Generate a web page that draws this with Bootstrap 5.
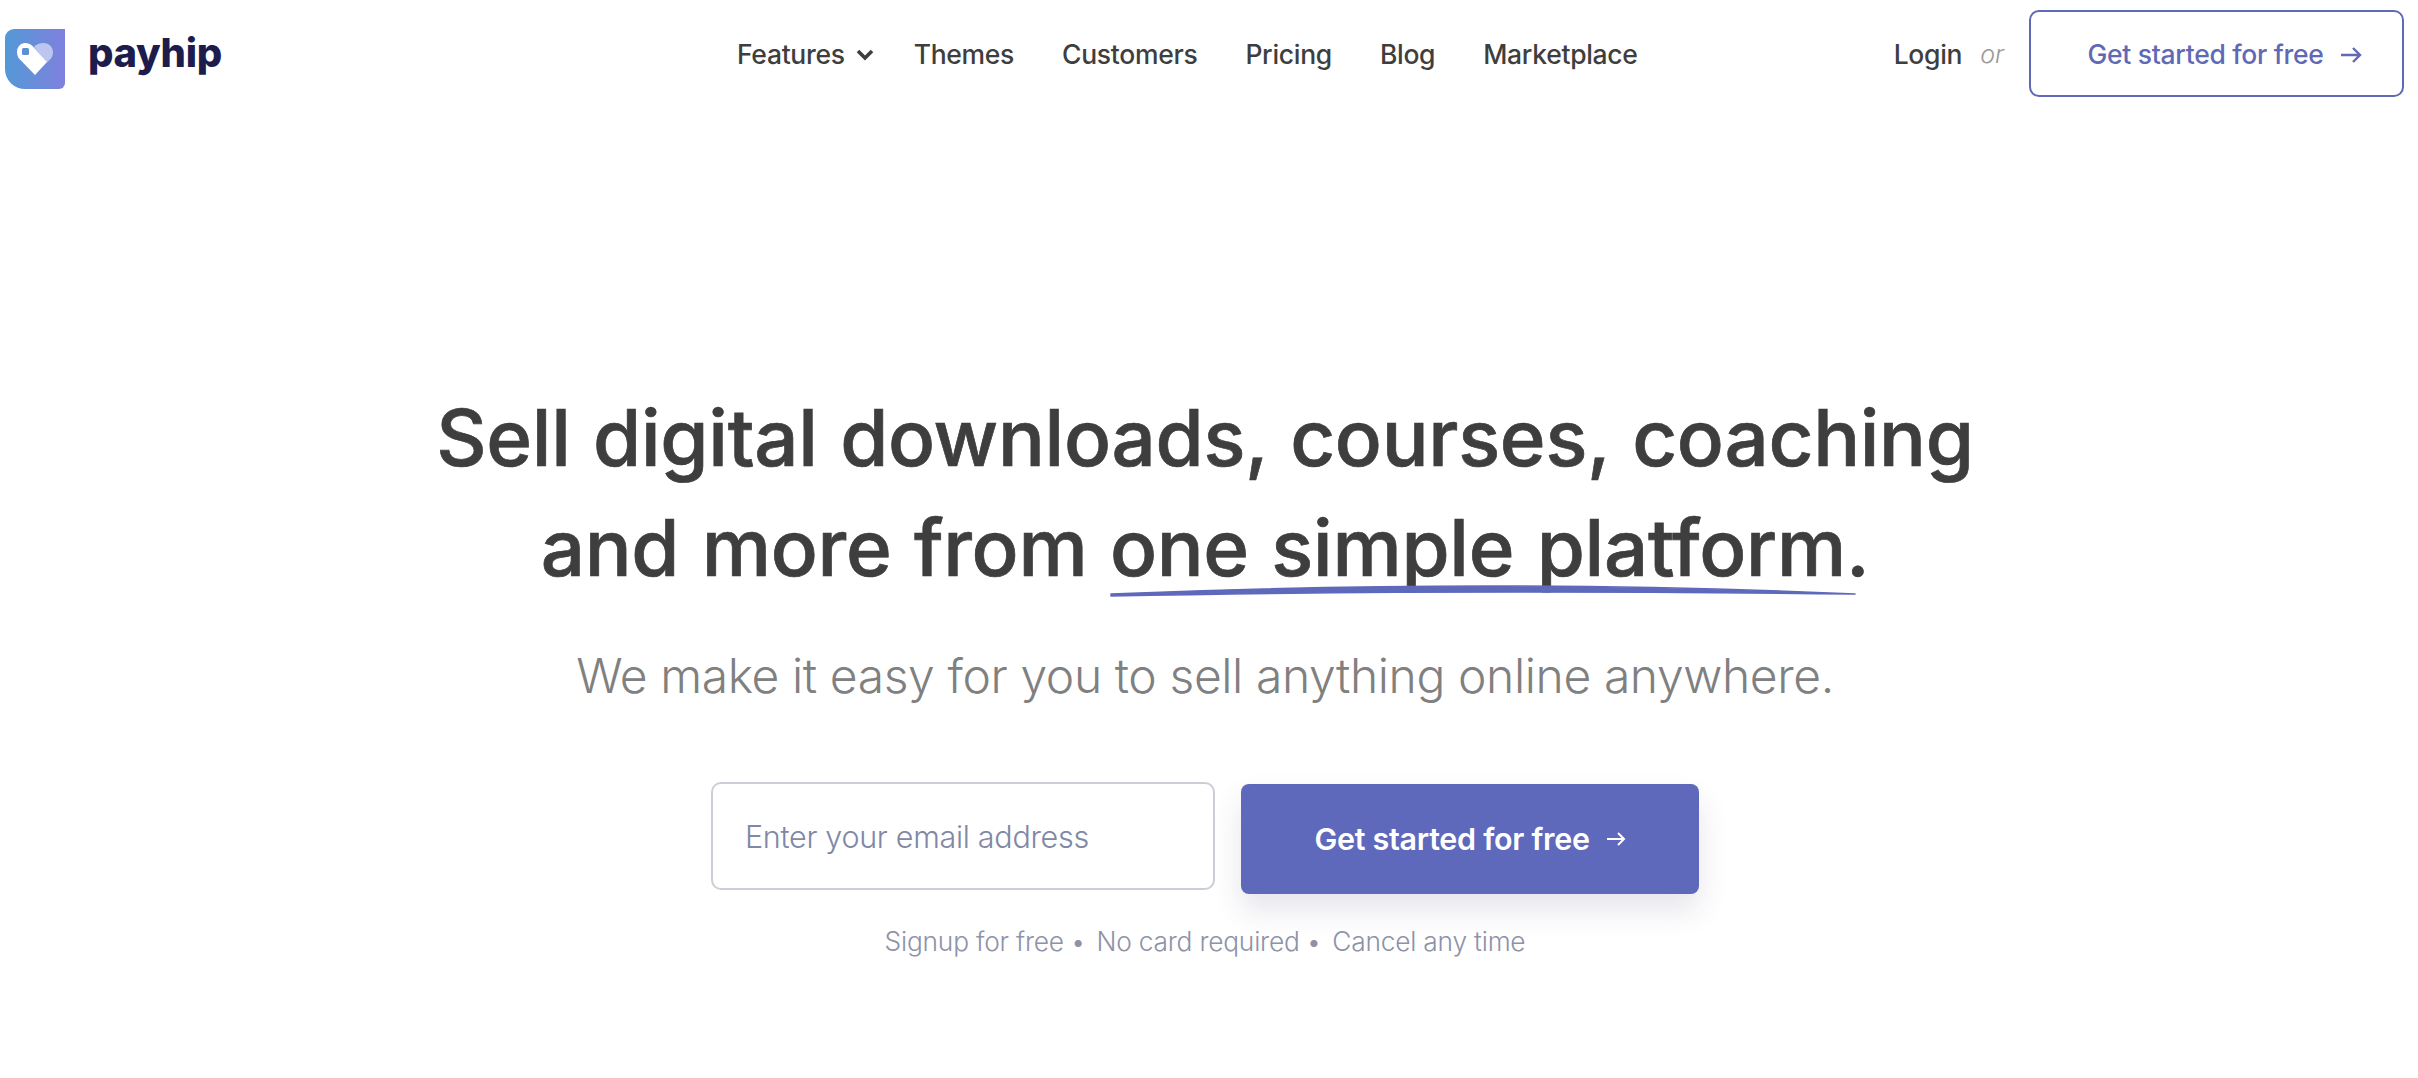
<!DOCTYPE html>
<html lang="en">
<head>
  <meta charset="UTF-8">
  <title>Payhip</title>
  <link href="https://cdn.jsdelivr.net/npm/bootstrap@5.3.3/dist/css/bootstrap.min.css" rel="stylesheet">
  <style>
    body { font-family: Inter, "Liberation Sans", sans-serif; color: #3e3e3e; background: #fff; }
    .top-bar { height: 106px; padding: 10px 14px 10px 5px; }
    .brand-box { width: 520px; }
    .logo-mark { margin-top: 12px; }
    .brand-name { font-weight: 800; font-size: 40px; color: #1c1d4d; letter-spacing: -.3px; margin-left: 23px; line-height: 1; }
    .main-links { gap: 48px; margin-left: 212px; padding-top: 4px; }
    .main-links a, .login-link { font-size: 26.5px; font-weight: 500; color: #3e3e3e; text-decoration: none; letter-spacing: -.3px; }
    .main-links .has-menu { margin-right: -8px; }
    .has-menu svg { margin-left: 3px; }
    .login-link, .or-word { padding-top: 4px; }
    .or-word { font-size: 25px; font-style: italic; font-weight: 300; color: #999; margin: 0 25px 0 18px; }
    .btn-ghost { width: 375px; height: 87px; padding: 9px 12px 6px 28px; border: 2px solid #5f69b5; border-radius: 10px; color: #5f69b5; font-size: 26.5px; font-weight: 500; letter-spacing: -.3px; background: #fff; }
    .hero-box { padding: 277px 8px 0 0; }
    .hero-title { font-size: 78px; font-weight: 500; -webkit-text-stroke: .7px #3e3e3e; line-height: 110px; margin: 0; color: #3e3e3e; letter-spacing: -.3px; word-spacing: 2px; }
    .scribble { position: relative; display: inline-block; }
    .scribble svg { position: absolute; left: 0; top: 89px; width: calc(100% + 10px); height: 16px; }
    .hero-sub { font-size: 48px; font-weight: 300; color: #808080; margin: 43px 0 0; line-height: 60px; letter-spacing: -.4px; }
    .signup-row { margin-top: 76px; gap: 26px; }
    .email-box { width: 504px; height: 108px; border: 2px solid #ccced6; border-radius: 10px; font-size: 30.5px; font-weight: 300; padding: 0 32px; letter-spacing: -.3px; }
    .email-box::placeholder { color: #8088a5; }
    .btn-solid { width: 458px; height: 110px; margin-top: 2px; background: #5f69bb; color: #fff; border: 0; border-radius: 8px; font-size: 30.5px; font-weight: 600; letter-spacing: -.3px; box-shadow: 0 16px 30px rgba(40, 44, 90, .12); }
    .btn-solid:hover { background: #5f69bb; color: #fff; }
    .fine-print { margin-top: 28px; font-size: 26.3px; font-weight: 300; color: #8d92a8; letter-spacing: -.2px; }
    .fine-print i { font-style: normal; margin: 0 11px 0 7px; }
  </style>
</head>
<body>

  <header class="top-bar d-flex align-items-center">
    <div class="brand-box d-flex align-items-center flex-shrink-0">
      <svg class="logo-mark" width="60" height="60" viewBox="0 0 60 60">
        <defs>
          <linearGradient id="logoFill" x1="0" y1="0" x2="1" y2="0">
            <stop offset="0" stop-color="#5399d6"/>
            <stop offset="1" stop-color="#7f80de"/>
          </linearGradient>
        </defs>
        <path d="M9 0H60V54a6 6 0 0 1-6 6H20A20 20 0 0 1 0 40V9A9 9 0 0 1 9 0Z" fill="url(#logoFill)"/>
        <path d="M29 18C31 15.5 35 14 38.5 14C44 14 48 18 48 23.5C48 26 47 28.5 45 30.5L42 33.5Z" fill="#bcc6ee"/>
        <path d="M20 14C23 14 25.5 15 27.5 17L42 33L30 46L14.5 30C13 28.5 12 26 12 23C12 18 15.5 14 20 14Z" fill="#fff"/>
        <rect x="17" y="19" width="7" height="7" rx="1.5" fill="#5b8fd6"/>
      </svg>
      <span class="brand-name">payhip</span>
    </div>
    <nav class="main-links d-flex align-items-center flex-grow-1">
      <a href="#" class="has-menu d-flex align-items-center gap-2">Features
        <svg width="18" height="14" viewBox="0 0 18 14"><path d="M2 3l7 7 7-7" fill="none" stroke="#3e3e3e" stroke-width="3.6"/></svg>
      </a>
      <a href="#">Themes</a>
      <a href="#">Customers</a>
      <a href="#">Pricing</a>
      <a href="#">Blog</a>
      <a href="#">Marketplace</a>
    </nav>
    <a href="#" class="login-link">Login</a>
    <span class="or-word">or</span>
    <button class="btn btn-ghost d-flex align-items-center justify-content-center gap-3 flex-shrink-0">Get started for free
      <svg width="22" height="20" viewBox="0 0 22 20"><path d="M1 10h19M13 3l7 7-7 7" fill="none" stroke="#5f69b5" stroke-width="2.4"/></svg>
    </button>
  </header>

  <main class="hero-box text-center">
    <h1 class="hero-title">Sell digital downloads, courses, coaching<br>and more from <span class="scribble">one simple platform<svg viewBox="0 0 746 16" preserveAspectRatio="none"><path d="M1 12C240 2 500 1 745 12C500 9 240 9 1 14Z" fill="#5f69bb" stroke="#5f69bb" stroke-width="1.5" stroke-linejoin="round"/></svg></span>.</h1>
    <p class="hero-sub">We make it easy for you to sell anything online anywhere.</p>
    <form class="signup-row d-flex justify-content-center align-items-start">
      <input type="email" class="form-control email-box" placeholder="Enter your email address">
      <button type="button" class="btn btn-solid d-flex align-items-center justify-content-center gap-3">Get started for free
        <svg width="20" height="18" viewBox="0 0 20 18"><path d="M1 9h17M12 3l6 6-6 6" fill="none" stroke="#fff" stroke-width="2"/></svg>
      </button>
    </form>
    <p class="fine-print">Signup for free<i>•</i>No card required<i>•</i>Cancel any time</p>
  </main>

</body>
</html>
